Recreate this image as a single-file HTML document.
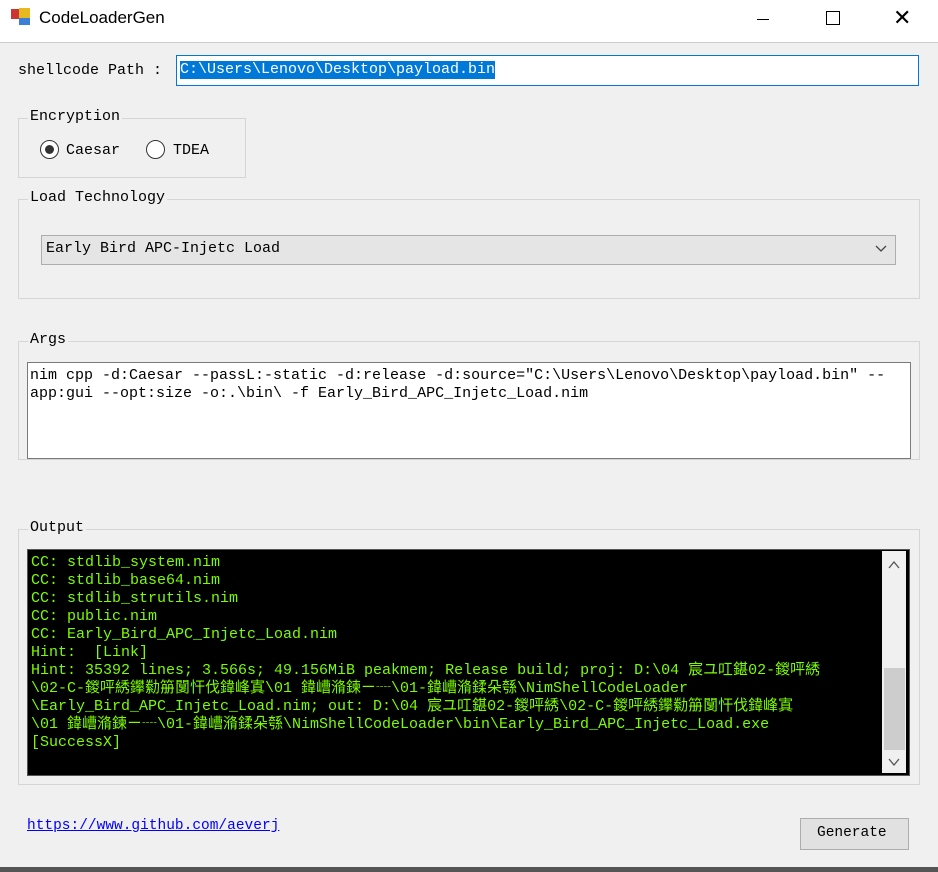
<!DOCTYPE html>
<html><head><meta charset="utf-8"><style>
body{margin:0;width:938px;height:872px;background:#f0f0f0;position:relative;overflow:hidden;font-family:"Liberation Mono","Noto Sans CJK SC",monospace;font-size:15px;color:#000}
.abs{position:absolute}
.title{left:0;top:0;width:938px;height:42px;background:#fff;border-bottom:1px solid #ccc}
.gb{position:absolute;border:1px solid #d5d5d5}
.gl{position:absolute;background:#f0f0f0;padding:0 2px;top:-11px;left:8px;line-height:18px}
.t{white-space:pre;line-height:18px}
</style></head><body>
<div class="abs title">
 <div class="abs" style="left:11px;top:9px;width:8px;height:10px;background:#c33"></div>
 <div class="abs" style="left:19px;top:8px;width:11px;height:10px;background:#e8b820"></div>
 <div class="abs" style="left:19px;top:18px;width:11px;height:7px;background:#3b7fd8"></div>
 <div class="abs" style="left:39px;top:8px;font-family:'Liberation Sans',sans-serif;font-size:17px">CodeLoaderGen</div>
 <div class="abs" style="left:757px;top:19px;width:12px;height:1px;background:#000"></div>
 <div class="abs" style="left:826px;top:11px;width:12px;height:12px;border:1px solid #000"></div>
 <div class="abs" style="left:893px;top:8px;font-family:'Liberation Sans',sans-serif;font-size:22px;line-height:20px">✕</div>
</div>
<div class="abs t" style="left:18px;top:62px">shellcode Path :</div>
<div class="abs" style="left:176px;top:55px;width:741px;height:29px;border:1px solid #0078d7;background:#fff"></div>
<div class="abs t" style="left:180px;top:61px;background:#0078d7;color:#fff">C:\Users\Lenovo\Desktop\payload.bin</div>

<div class="gb" style="left:18px;top:118px;width:226px;height:58px"><div class="gl" style="left:9px">Encryption</div></div>
<div class="abs" style="left:40px;top:140px;width:17px;height:17px;border:1px solid #333;border-radius:50%;background:#fff"></div>
<div class="abs" style="left:45px;top:145px;width:9px;height:9px;border-radius:50%;background:#333"></div>
<div class="abs t" style="left:66px;top:142px">Caesar</div>
<div class="abs" style="left:146px;top:140px;width:17px;height:17px;border:1px solid #333;border-radius:50%;background:#fff"></div>
<div class="abs t" style="left:173px;top:142px">TDEA</div>

<div class="gb" style="left:18px;top:199px;width:900px;height:98px"><div class="gl" style="left:9px">Load Technology</div></div>
<div class="abs" style="left:41px;top:235px;width:853px;height:28px;border:1px solid #adadad;background:#e5e5e5"></div>
<div class="abs t" style="left:46px;top:240px">Early Bird APC-Injetc Load</div>
<svg class="abs" style="left:875px;top:245px" width="12" height="8"><path d="M1 1 L6 6 L11 1" fill="none" stroke="#444" stroke-width="1.3"/></svg>

<div class="gb" style="left:18px;top:341px;width:900px;height:117px"><div class="gl" style="left:9px">Args</div></div>
<div class="abs" style="left:27px;top:362px;width:882px;height:95px;border:1px solid #7a7a7a;background:#fff"></div>
<div class="abs t" style="left:30px;top:367px;font-size:15px">nim cpp -d:Caesar --passL:-static -d:release -d:source="C:\Users\Lenovo\Desktop\payload.bin" --
app:gui --opt:size -o:.\bin\ -f Early_Bird_APC_Injetc_Load.nim</div>

<div class="gb" style="left:18px;top:529px;width:900px;height:254px"><div class="gl" style="left:9px">Output</div></div>
<div class="abs" style="left:27px;top:549px;width:881px;height:225px;border:1px solid #555;background:#000"></div>
<div class="abs" style="left:882px;top:551px;width:24px;height:222px;background:#f0f0f0"></div>
<div class="abs" style="left:884px;top:668px;width:21px;height:82px;background:#cdcdcd"></div>
<svg class="abs" style="left:888px;top:561px" width="12" height="8"><path d="M1 7 L6 1 L11 7" fill="none" stroke="#555" stroke-width="1.3"/></svg>
<svg class="abs" style="left:888px;top:758px" width="12" height="8"><path d="M1 1 L6 7 L11 1" fill="none" stroke="#555" stroke-width="1.3"/></svg>
<div class="abs t" style="left:31px;top:554px;color:#7cfc00;font-size:15px">CC: stdlib_system.nim
CC: stdlib_base64.nim
CC: stdlib_strutils.nim
CC: public.nim
CC: Early_Bird_APC_Injetc_Load.nim
Hint:  [Link]
Hint: 35392 lines; 3.566s; 49.156MiB peakmem; Release build; proj: D:\04 宸ユ叿鍖02-鍐呯綉
\02-C-鍐呯綉鑻勬笧闅忓伐鍏峰寘\01 鍏嶆潃鍊ㄧ┈\01-鍏嶆潃鍒朵綔\NimShellCodeLoader
\Early_Bird_APC_Injetc_Load.nim; out: D:\04 宸ユ叿鍖02-鍐呯綉\02-C-鍐呯綉鑻勬笧闅忓伐鍏峰寘
\01 鍏嶆潃鍊ㄧ┈\01-鍏嶆潃鍒朵綔\NimShellCodeLoader\bin\Early_Bird_APC_Injetc_Load.exe
[SuccessX]</div>

<div class="abs t" style="left:27px;top:817px;color:#0000ff;text-decoration:underline;font-size:14.5px">https://www.github.com/aeverj</div>
<div class="abs" style="left:800px;top:818px;width:107px;height:30px;border:1px solid #adadad;background:#e1e1e1"></div>
<div class="abs t" style="left:817px;top:824px;font-size:14.5px">Generate</div>
<div class="abs" style="left:0;top:867px;width:938px;height:5px;background:#555"></div>
</body></html>
